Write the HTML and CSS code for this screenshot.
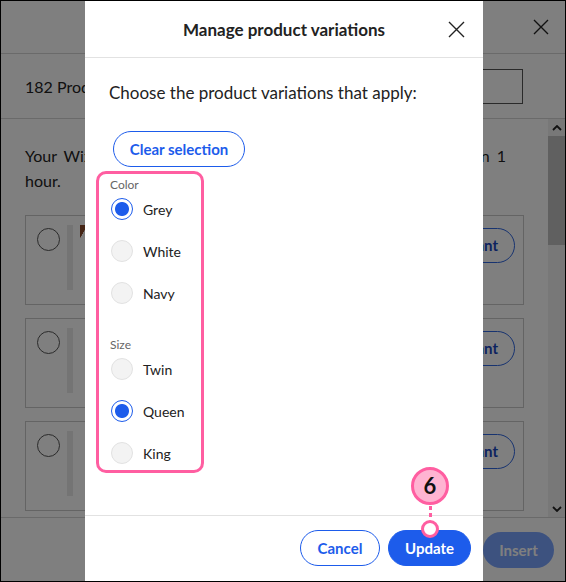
FILE: index.html
```html
<!DOCTYPE html>
<html>
<head lang="en">
    <meta charset="UTF-8">
    <title>Manage product variations</title>
    <link rel="stylesheet" href="styles.css">
</head>
<body>

<div class="frame">
    <!-- app page behind the modal -->
    <div class="page">
        <div class="page-head">
            <span class="x-icon x-page">
                <svg width="16" height="16" viewBox="0 0 16 16"><path d="M1 1L15 15M15 1L1 15" stroke="#222" stroke-width="1.4" fill="none"/></svg>
            </span>
        </div>
        <div class="page-bar">
            <span class="count">182 Products</span>
            <span class="search"></span>
        </div>
        <div class="page-main">
            <div class="list">
                <p class="notice"><span class="first">Your Wix Stores products will be synced with this app again in 1</span>hour.</p>
                <div class="card">
                    <span class="pick"></span>
                    <span class="thumb"></span>
                    <span class="photo"></span>
                    <span class="grow"></span>
                    <span class="variant">Select Variant</span>
                </div>
                <div class="card">
                    <span class="pick"></span>
                    <span class="thumb"></span>
                    <span class="grow"></span>
                    <span class="variant">Select Variant</span>
                </div>
                <div class="card">
                    <span class="pick"></span>
                    <span class="thumb"></span>
                    <span class="grow"></span>
                    <span class="variant">Select Variant</span>
                </div>
            </div>
            <div class="scroll">
                <span class="arrow">
                    <svg width="10" height="6" viewBox="0 0 10 6"><path d="M1 5L5 1L9 5" stroke="#222" stroke-width="1.8" fill="none"/></svg>
                </span>
                <span class="thumb-bar"></span>
                <span class="grow"></span>
                <span class="arrow">
                    <svg width="10" height="6" viewBox="0 0 10 6"><path d="M1 1L5 5L9 1" stroke="#222" stroke-width="1.8" fill="none"/></svg>
                </span>
            </div>
        </div>
        <div class="page-foot">
            <span class="insert">Insert</span>
        </div>
    </div>

    <div class="shade"></div>

    <!-- modal -->
    <div class="modal">
        <div class="modal-head">
            <span></span>
            <h1>Manage product variations</h1>
            <span class="x-icon">
                <svg width="17" height="17" viewBox="0 0 17 17"><path d="M1 1L16 16M16 1L1 16" stroke="#222" stroke-width="1.4" fill="none"/></svg>
            </span>
        </div>
        <div class="modal-body">
            <p class="lead">Choose the product variations that apply:</p>
            <span class="btn btn-line clear">Clear selection</span>
            <div class="options">
                <div class="group">Color</div>
                <label class="opt"><em class="on"></em><span>Grey</span></label>
                <label class="opt"><em></em><span>White</span></label>
                <label class="opt"><em></em><span>Navy</span></label>
                <div class="group size">Size</div>
                <label class="opt"><em></em><span>Twin</span></label>
                <label class="opt"><em class="on"></em><span>Queen</span></label>
                <label class="opt"><em></em><span>King</span></label>
            </div>
        </div>
        <div class="modal-foot">
            <span class="btn btn-line">Cancel</span>
            <span class="btn btn-fill">Update</span>
        </div>
    </div>

    <!-- step callout over the Update button -->
    <div class="callout">
        <span class="num">6</span>
        <span class="dots"></span>
        <span class="ring"></span>
    </div>
</div>

</body>
</html>
```

FILE: styles.css
```css
* {
    padding: 0;
    margin: 0;
    box-sizing: border-box;
}
body {
    font-family: "Lato", "Noto Sans", sans-serif;
    color: #222;
}
.frame {
    position: relative;
    width: 566px;
    height: 582px;
    border: 1px solid #000;
    overflow: hidden;
    background: #fff;
}

/* page behind */
.page {
    display: flex;
    flex-direction: column;
    height: 100%;
}
.page-head {
    height: 53px;
    border-bottom: 1px solid #d4d4d4;
    display: flex;
    justify-content: flex-end;
    align-items: center;
    padding-right: 16px;
    flex-shrink: 0;
}
.x-icon { display: flex; }
.page-bar {
    height: 65px;
    border-bottom: 1px solid #d4d4d4;
    display: flex;
    align-items: center;
    justify-content: space-between;
    padding: 0 42px 0 24px;
    flex-shrink: 0;
    font-size: 16px;
}
.search {
    width: 200px;
    height: 35px;
    border: 1px solid #555;
}
.page-main {
    flex: 1;
    display: flex;
    min-height: 0;
}
.list {
    flex: 1;
    padding: 24px 24px 0 24px;
}
.notice {
    font-size: 16px;
    line-height: 25px;
    margin-bottom: 22px;
}
.notice .first {
    display: block;
    text-align: justify;
    text-align-last: justify;
    margin-right: 18px;
}
.card {
    height: 90px;
    border: 1px solid #c8c8c8;
    margin-bottom: 13px;
    display: flex;
    align-items: flex-start;
    padding: 12px 8px 0 11px;
}
.pick {
    width: 23px;
    height: 23px;
    border: 1px solid #555;
    border-radius: 50%;
}
.thumb {
    width: 6px;
    height: 65px;
    margin: -3px 0 0 7px;
    background: #e8e8e8;
}
.photo {
    width: 6px;
    height: 22px;
    margin: -3px 0 0 7px;
    background: linear-gradient(120deg, #8a4a2a 40%, #fff 42%);
}
.grow { flex: 1; }
.variant {
    height: 35px;
    line-height: 33px;
    padding: 0 16px;
    border: 1px solid #2f66e0;
    border-radius: 18px;
    color: #1846c0;
    font-weight: bold;
    font-size: 15px;
}
.scroll {
    width: 17px;
    background: #f0f0f0;
    display: flex;
    flex-direction: column;
    align-items: center;
}
.arrow {
    height: 17px;
    display: flex;
    align-items: center;
}
.thumb-bar {
    width: 17px;
    height: 109px;
    background: #c0c0c0;
}
.page-foot {
    height: 64px;
    border-top: 1px solid #d4d4d4;
    display: flex;
    justify-content: flex-end;
    align-items: center;
    padding-right: 11px;
    flex-shrink: 0;
}
.insert {
    width: 71px;
    height: 36px;
    line-height: 36px;
    text-align: center;
    border-radius: 18px;
    background: #7aa4ff;
    color: #fff;
    font-weight: bold;
    font-size: 15px;
}
.shade {
    position: absolute;
    left: 0;
    top: 0;
    right: 0;
    bottom: 0;
    background: rgba(0, 0, 0, 0.5);
}

/* modal */
.modal {
    position: absolute;
    left: 84px;
    top: 0;
    bottom: 0;
    width: 398px;
    background: #fff;
    display: flex;
    flex-direction: column;
}
.modal-head {
    height: 57px;
    border-bottom: 1px solid #e2e2e2;
    display: grid;
    grid-template-columns: 54px 1fr 54px;
    align-items: center;
    justify-items: center;
    flex-shrink: 0;
}
.modal-head h1 {
    font-size: 17px;
    font-weight: bold;
    color: #222;
}
.modal-body {
    flex: 1;
    padding: 23px 24px 0 24px;
}
.lead {
    font-size: 17px;
    line-height: 24px;
    color: #222;
    margin-bottom: 26px;
}
.btn {
    display: inline-block;
    height: 36px;
    line-height: 34px;
    border-radius: 18px;
    font-weight: bold;
    font-size: 15px;
    text-align: center;
}
.btn-line {
    border: 1px solid #1d5ceb;
    color: #1d5ceb;
    background: #fff;
}
.btn-fill {
    border: 1px solid #1d5ceb;
    background: #1d5ceb;
    color: #fff;
}
.clear {
    width: 132px;
    margin-left: 4px;
}
.options {
    width: 108px;
    margin: 4px 0 0 -13px;
    border: 3px solid #ff5ea1;
    border-radius: 10px;
    padding: 3px 0 6px 11px;
}
.group {
    font-size: 12px;
    line-height: 16px;
    color: #666;
    margin-bottom: 5px;
}
.group.size {
    margin-top: 33px;
}
.opt {
    display: flex;
    align-items: center;
    height: 22px;
    margin-bottom: 20px;
    font-size: 14px;
    color: #222;
}
.opt:last-child { margin-bottom: 0; }
.opt em {
    width: 22px;
    height: 22px;
    border-radius: 50%;
    border: 1px solid #e2e2e2;
    background: #f3f3f3;
    margin: 0 10px 0 1px;
    flex-shrink: 0;
}
.opt em.on {
    border-color: #1d5ceb;
    background: #fff radial-gradient(circle, #1d5ceb 6.5px, transparent 7.5px);
}
.modal-foot {
    height: 66px;
    border-top: 1px solid #e2e2e2;
    display: flex;
    justify-content: flex-end;
    align-items: flex-start;
    gap: 8px;
    padding: 14px 12px 0 0;
    flex-shrink: 0;
}
.modal-foot .btn-line { width: 80px; }
.modal-foot .btn-fill { width: 83px; }

/* step callout */
.callout {
    position: absolute;
    left: 410px;
    top: 466px;
    width: 38px;
    display: flex;
    flex-direction: column;
    align-items: center;
}
.num {
    width: 38px;
    height: 38px;
    border-radius: 50%;
    border: 3px solid #ff5ea1;
    background: #ffb4d2;
    font-weight: bold;
    font-size: 22px;
    line-height: 32px;
    text-align: center;
    color: #111;
}
.dots {
    width: 3px;
    height: 14px;
    margin-top: 1px;
    background: repeating-linear-gradient(#ff5ea1 0 4px, transparent 4px 7px);
}
.ring {
    width: 18px;
    height: 18px;
    border-radius: 50%;
    border: 3px solid #ff5ea1;
    background: #fff;
}
```
